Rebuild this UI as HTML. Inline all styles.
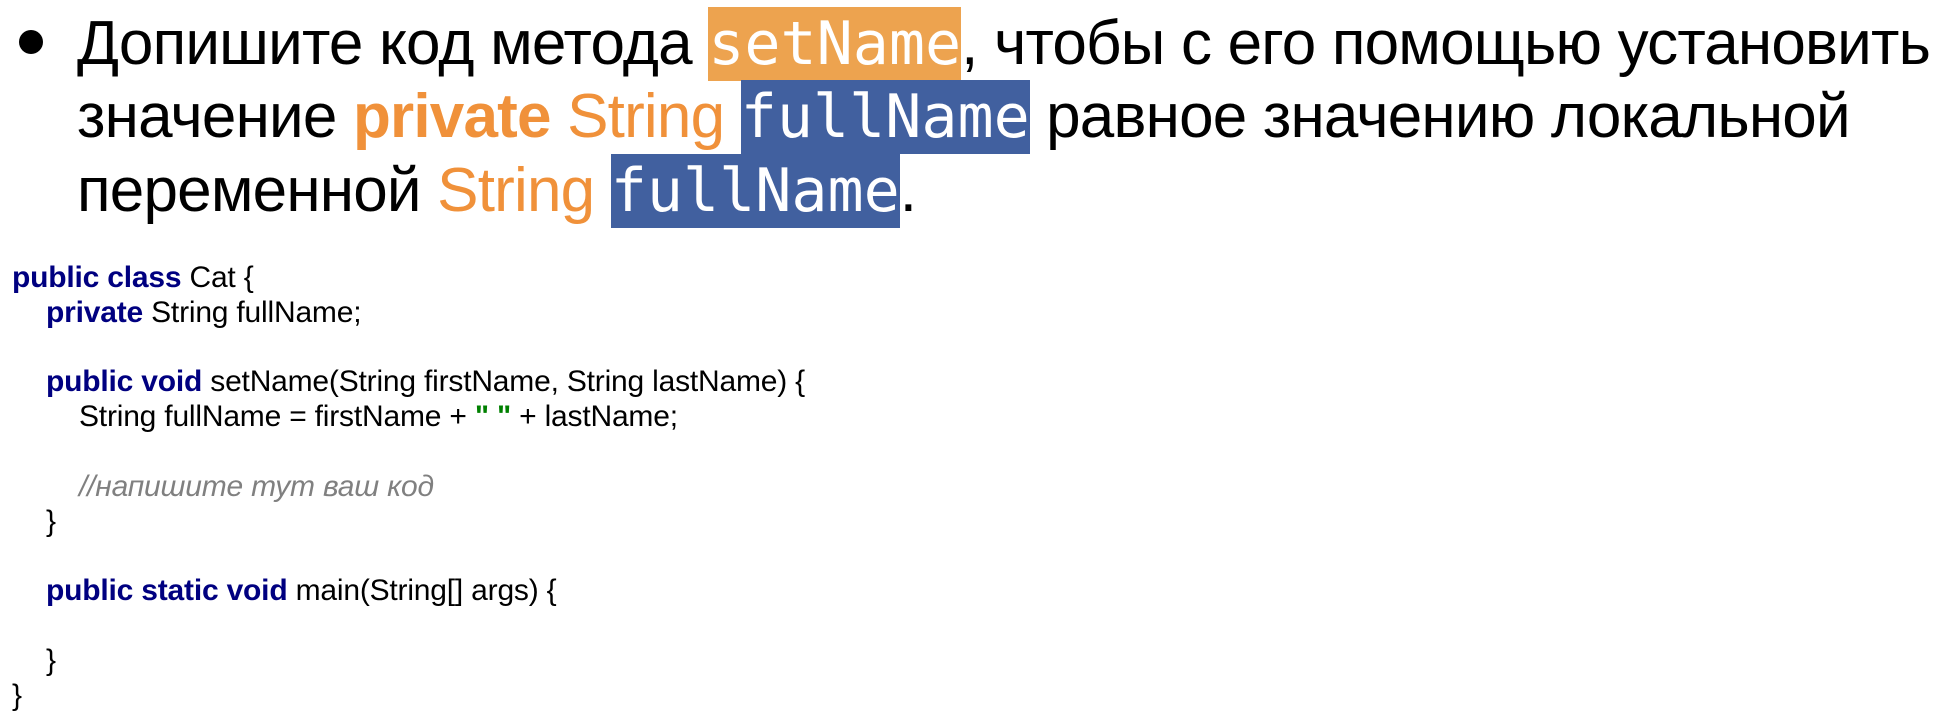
<!DOCTYPE html>
<html><head><meta charset="utf-8"><style>
body{margin:0;width:1956px;height:728px;background:#fff;overflow:hidden;position:relative;font-family:"Liberation Sans",Arial,sans-serif}
.l{position:absolute;left:77px;font-size:62px;white-space:nowrap;height:74px;line-height:74px;color:#000;letter-spacing:-0.8px}
.m{font-family:"DejaVu Sans Mono",monospace;font-size:60px;color:#fff;display:inline-block;height:74px;line-height:74px;vertical-align:top;letter-spacing:0}
.o{background:#eda34f}.b{background:#41609f}
.or{color:#f0913a}
.bul{position:absolute;left:19px;top:30px;width:24px;height:24px;border-radius:50%;background:#000}
.c{position:absolute;left:12px;font-size:30px;line-height:34.8px;top:261px;letter-spacing:-0.2px}
.c div{height:34.8px;white-space:nowrap}
.i1{padding-left:34px}.i2{padding-left:67px}
.k{color:#000080;font-weight:bold}.s{color:#008000;font-weight:bold}.cm{color:#808080;font-style:italic}
</style></head><body>
<div class="bul"></div>
<div class="l" style="top:7px">Допишите код метода <span class="m o">setName</span>, чтобы с его помощью установить</div>
<div class="l" style="top:80px">значение <b class="or">private</b> <span class="or">String</span> <span class="m b">fullName</span> равное значению локальной</div>
<div class="l" style="top:154px">переменной <span class="or">String</span> <span class="m b">fullName</span>.</div>
<div class="c"><div><span class="k">public class</span> Cat {</div><div class="i1"><span class="k">private</span> String fullName;</div><div></div><div class="i1"><span class="k">public void</span> setName(String firstName, String lastName) {</div><div class="i2">String fullName = firstName + <span class="s">" "</span> + lastName;</div><div></div><div class="i2"><span class="cm">//напишите тут ваш код</span></div><div class="i1">}</div><div></div><div class="i1"><span class="k">public static void</span> main(String[] args) {</div><div></div><div class="i1">}</div><div>}</div></div>
</body></html>
